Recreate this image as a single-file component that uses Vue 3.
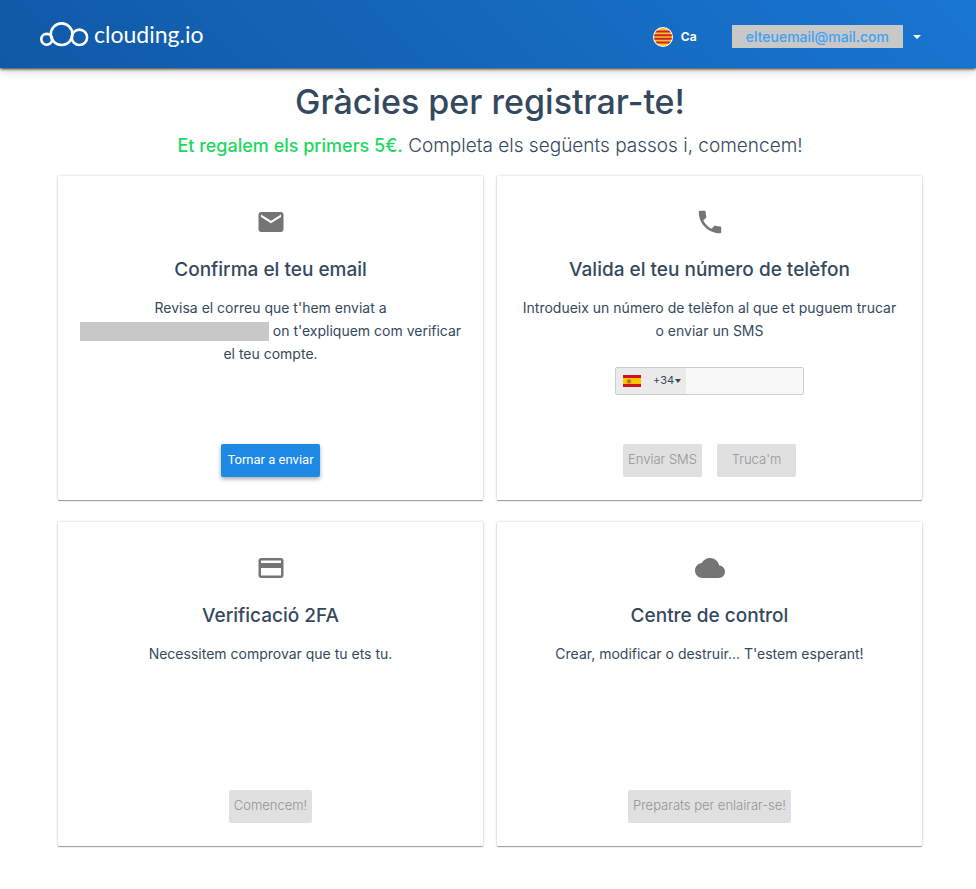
<script setup>
import { ref } from 'vue'

const prefix = ref('+34')
const phone = ref('')
</script>

<template>
  <div class="page">
    <header class="topbar">
      <a class="brand" href="#" aria-label="clouding.io">
        <svg class="brand-mark" viewBox="0 0 49 26" aria-hidden="true">
          <g fill="none" stroke="#fff" stroke-width="2.6">
            <circle cx="6.7" cy="18.3" r="5.400" />
            <circle cx="21.6" cy="13.2" r="10.800" />
            <circle cx="39.4" cy="16.3" r="7.700" />
          </g>
        </svg>
        <span class="brand-name">clouding.io</span>
      </a>
      <nav class="tools">
        <button class="lang" type="button">
          <svg class="flag-round" viewBox="0 0 20 20" aria-hidden="true">
            <defs>
              <clipPath id="disc"><circle cx="10" cy="10" r="9" /></clipPath>
            </defs>
            <circle cx="10" cy="10" r="10" fill="#fff" />
            <g clip-path="url(#disc)">
              <rect width="20" height="20" fill="#f6c51e" />
              <path d="M0 4.500h20M0 8.200h20M0 11.800h20M0 15.500h20" stroke="#cf1f2e" stroke-width="2" />
            </g>
          </svg>
          <span>Ca</span>
        </button>
        <button class="account" type="button">
          <span class="account-mail">elteuemail@mail.com</span>
          <svg class="caret" viewBox="0 0 8 4" aria-hidden="true"><path d="M0 0h8L4 4z" fill="#fff" /></svg>
        </button>
      </nav>
    </header>

    <main class="content">
      <h1>Gràcies per registrar-te!</h1>
      <p class="lead"><strong>Et regalem els primers 5€.</strong> Completa els següents passos i, comencem!</p>

      <div class="cards">
        <section class="card">
          <svg class="icon" viewBox="0 0 24 24" aria-hidden="true">
            <path d="M20 4H4c-1.100 0-1.990.9-1.990 2L2 18c0 1.100.9 2 2 2h16c1.100 0 2-.9 2-2V6c0-1.100-.9-2-2-2zm0 4l-8 5-8-5V6l8 5 8-5v2z" />
          </svg>
          <h2>Confirma el teu email</h2>
          <p>Revisa el correu que t'hem enviat a <span class="redacted"></span> on t'expliquem com verificar el teu compte.</p>
          <div class="actions">
            <button class="btn primary" type="button">Tornar a enviar</button>
          </div>
        </section>

        <section class="card">
          <svg class="icon" viewBox="0 0 24 24" aria-hidden="true">
            <path d="M6.620 10.790c1.440 2.830 3.760 5.140 6.590 6.590l2.200-2.200c.27-.27.67-.36 1.020-.24 1.120.37 2.330.57 3.570.57.55 0 1 .45 1 1V20c0 .55-.45 1-1 1-9.390 0-17-7.610-17-17 0-.55.45-1 1-1h3.500c.55 0 1 .45 1 1 0 1.250.2 2.450.57 3.570.11.35.03.74-.25 1.020l-2.200 2.200z" />
          </svg>
          <h2>Valida el teu número de telèfon</h2>
          <p>Introdueix un número de telèfon al que et puguem trucar o enviar un SMS</p>
          <div class="phone">
            <div class="country">
              <svg class="flag" viewBox="0 0 18 12" aria-hidden="true">
                <rect width="18" height="12" fill="#d0121f" />
                <rect y="3" width="18" height="6" fill="#ffc400" />
                <path d="M4.500 4.500h3v2.500a1.500 1.500 0 0 1-3 0z" fill="#b5651d" />
                <path d="M4 5v3.500M8 5v3.500" stroke="#a98a4a" stroke-width=".6" />
              </svg>
              <select v-model="prefix" aria-label="Prefix">
                <option>+34</option>
              </select>
              <svg class="caret-small" viewBox="0 0 6 4" aria-hidden="true"><path d="M0 0h6L3 4z" fill="#444" /></svg>
            </div>
            <input v-model="phone" type="tel" aria-label="Telèfon" />
          </div>
          <div class="actions">
            <button class="btn" type="button" disabled>Enviar SMS</button>
            <button class="btn" type="button" disabled>Truca'm</button>
          </div>
        </section>

        <section class="card">
          <svg class="icon" viewBox="0 0 24 24" aria-hidden="true">
            <path d="M20 4H4c-1.110 0-1.990.89-1.990 2L2 18c0 1.110.89 2 2 2h16c1.110 0 2-.89 2-2V6c0-1.110-.89-2-2-2zm0 14H4v-6h16v6zm0-10H4V6h16v2z" />
          </svg>
          <h2>Verificació 2FA</h2>
          <p>Necessitem comprovar que tu ets tu.</p>
          <div class="actions">
            <button class="btn" type="button" disabled>Comencem!</button>
          </div>
        </section>

        <section class="card">
          <svg class="icon" viewBox="0 0 24 24" aria-hidden="true">
            <path d="M19.350 10.040C18.670 6.590 15.640 4 12 4 9.110 4 6.600 5.640 5.350 8.040 2.340 8.360 0 10.910 0 14c0 3.310 2.690 6 6 6h13c2.760 0 5-2.240 5-5 0-2.640-2.050-4.780-4.650-4.960z" />
          </svg>
          <h2>Centre de control</h2>
          <p>Crear, modificar o destruir... T'estem esperant!</p>
          <div class="actions">
            <button class="btn" type="button" disabled>Preparats per enlairar-se!</button>
          </div>
        </section>
      </div>
    </main>
  </div>
</template>

<style>
body {
  margin: 0;
  background: #fff;
}
</style>

<style scoped>
.page {
  font-family: Inter, "Liberation Sans", sans-serif;
  font-size: 14px;
  color: #34495e;
}

.page * {
  box-sizing: border-box;
}

button,
input,
select {
  font: inherit;
  color: inherit;
  margin: 0;
}

.topbar {
  display: flex;
  align-items: center;
  justify-content: space-between;
  height: 68px;
  padding: 0 55px 0 40px;
  background: linear-gradient(45deg, #1059a6, #1976d2);
  box-shadow: 0 1px 3px rgba(0, 0, 0, 0.8), 0 4px 10px rgba(0, 0, 0, 0.14);
}

.brand {
  display: flex;
  align-items: center;
  gap: 5px;
  color: #fff;
  text-decoration: none;
}

.brand-mark {
  width: 49px;
  height: 26px;
}

.brand-name {
  font-family: Lato, sans-serif;
  font-size: 23px;
  line-height: 28px;
}

.tools {
  display: flex;
  align-items: center;
  gap: 35px;
  padding-top: 5px;
}

.lang,
.account {
  display: flex;
  align-items: center;
  padding: 0;
  border: 0;
  background: none;
  cursor: pointer;
}

.lang {
  gap: 8px;
  font-size: 12px;
  font-weight: 700;
  color: #fff;
}

.flag-round {
  width: 20px;
  height: 20px;
}

.account {
  gap: 10px;
}

.account-mail {
  padding: 0 14px;
  background: #c8c8c8;
  color: #42a0f0;
  font-weight: 500;
  line-height: 23px;
}

.caret {
  width: 8px;
  height: 4px;
}

.content {
  padding: 10px 54px 40px 58px;
  text-align: center;
}

h1 {
  margin: 0;
  font-size: 34px;
  font-weight: 500;
  line-height: 48px;
}

.lead {
  margin: 8px 0 18px;
  font-size: 19px;
  font-weight: 300;
  line-height: 24px;
}

.lead strong {
  font-size: 18px;
  font-weight: 500;
  color: #1ed760;
}

.cards {
  display: grid;
  grid-template-columns: 1fr 1fr;
  gap: 22px 14px;
}

.card {
  display: flex;
  flex-direction: column;
  align-items: center;
  min-height: 324px;
  padding: 31px 20px 23px;
  border-radius: 1px;
  background: #fff;
  box-shadow: 0 1px 1px rgba(0, 0, 0, 0.35), 0 0 3px rgba(0, 0, 0, 0.2);
}

.icon {
  width: 30px;
  height: 30px;
  fill: #757575;
}

h2 {
  margin: 21px 0 14px;
  font-size: 19px;
  font-weight: 500;
  line-height: 24px;
}

.card p {
  margin: 0;
  font-weight: 400;
  line-height: 23px;
}

.redacted {
  display: inline-block;
  width: 189px;
  height: 19px;
  background: #c8c8c8;
  vertical-align: -5px;
}

.phone {
  display: flex;
  width: 189px;
  height: 28px;
  margin-top: 25px;
  overflow: hidden;
  border: 1px solid #ccc;
  border-radius: 2px;
  background: #f8f8f8;
}

.country {
  display: flex;
  align-items: center;
  width: 70px;
  padding-left: 7px;
  background: #eaeaea;
}

.flag {
  width: 18px;
  height: 12px;
  margin-right: 12px;
}

.country select {
  width: 22px;
  padding: 0 0 2px;
  border: 0;
  appearance: none;
  background: none;
  font-size: 11px;
}

.caret-small {
  width: 6px;
  height: 4px;
}

.phone input {
  flex: 1;
  min-width: 0;
  padding: 0 8px;
  border: 0;
  background: none;
}

.actions {
  display: flex;
  justify-content: center;
  gap: 15px;
  margin-top: auto;
}

.btn {
  min-width: 79px;
  height: 33px;
  padding: 0 5px 3px;
  border: 0;
  border-radius: 2px;
  background: #e0e0e0;
  color: #949494;
  font-size: 13px;
  font-weight: 300;
}

.btn.primary {
  padding: 0 6px 2px;
  background: #1e88e5;
  color: #fff;
  font-family: Roboto, sans-serif;
  font-weight: 400;
  box-shadow: 0 2px 4px rgba(0, 0, 0, 0.35);
  cursor: pointer;
}
</style>
